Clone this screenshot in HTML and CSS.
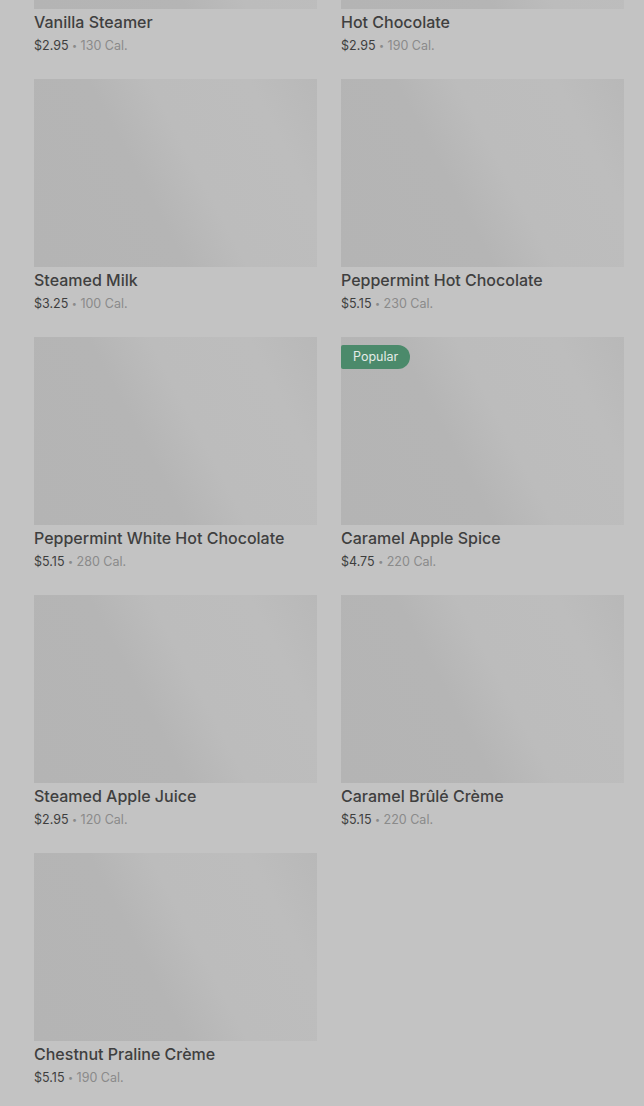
FILE: index.html
```html
<!DOCTYPE html>
<html lang="en-US">
<head>
	<meta charset="utf-8">
	<title>Menu - Hot Drinks</title>
	<link rel="stylesheet" href="styles.css">
</head>
<body>
<div class="menu">
	<!-- product grid, page is scrolled so first row is cut off -->
	<div class="grid">
		<div class="item">
			<div class="thumb"></div>
			<div class="name">Vanilla Steamer</div>
			<div class="meta"><span class="price">$2.95</span> <span class="dot">&bull;</span> 130 Cal.</div>
		</div>
		<div class="item">
			<div class="thumb"></div>
			<div class="name">Hot Chocolate</div>
			<div class="meta"><span class="price">$2.95</span> <span class="dot">&bull;</span> 190 Cal.</div>
		</div>
		<div class="item">
			<div class="thumb"></div>
			<div class="name">Steamed Milk</div>
			<div class="meta"><span class="price">$3.25</span> <span class="dot">&bull;</span> 100 Cal.</div>
		</div>
		<div class="item">
			<div class="thumb"></div>
			<div class="name">Peppermint Hot Chocolate</div>
			<div class="meta"><span class="price">$5.15</span> <span class="dot">&bull;</span> 230 Cal.</div>
		</div>
		<div class="item">
			<div class="thumb"></div>
			<div class="name">Peppermint White Hot Chocolate</div>
			<div class="meta"><span class="price">$5.15</span> <span class="dot">&bull;</span> 280 Cal.</div>
		</div>
		<div class="item">
			<div class="thumb"><span class="badge">Popular</span></div>
			<div class="name">Caramel Apple Spice</div>
			<div class="meta"><span class="price">$4.75</span> <span class="dot">&bull;</span> 220 Cal.</div>
		</div>
		<div class="item">
			<div class="thumb"></div>
			<div class="name">Steamed Apple Juice</div>
			<div class="meta"><span class="price">$2.95</span> <span class="dot">&bull;</span> 120 Cal.</div>
		</div>
		<div class="item">
			<div class="thumb"></div>
			<div class="name">Caramel Brûlé Crème</div>
			<div class="meta"><span class="price">$5.15</span> <span class="dot">&bull;</span> 220 Cal.</div>
		</div>
		<div class="item">
			<div class="thumb"></div>
			<div class="name">Chestnut Praline Crème</div>
			<div class="meta"><span class="price">$5.15</span> <span class="dot">&bull;</span> 190 Cal.</div>
		</div>
	</div>
</div>
</body>
</html>
```

FILE: styles.css
```css
html {
	background: #c3c3c3;
}
body {
	margin: 0;
	height: 1106px;
	overflow: hidden;
	font-family: Inter, "Noto Sans", sans-serif;
	color: #3b3b3b;
}
.menu {
	margin-top: -179px;
	padding: 0 20px 0 34px;
}
.grid {
	display: grid;
	grid-template-columns: 283px 283px;
	column-gap: 24px;
}
.item {
	margin-bottom: 22px;
}
.thumb {
	position: relative;
	height: 188px;
	background: linear-gradient(62deg, #b4b4b4 0%, #b5b5b5 40%, #bcbcbc 56%, #bdbdbd 82%, #b8b8b8 100%);
}
.badge {
	position: absolute;
	top: 8px;
	left: 0;
	height: 24px;
	line-height: 24px;
	padding: 0 12px;
	background: #4b8a6b;
	color: #e4ece8;
	font-size: 12.5px;
	border-radius: 2px 12px 12px 2px;
}
.name {
	margin-top: 1px;
	font-size: 16px;
	font-weight: 500;
	line-height: 24px;
	color: #3f3f3f;
}
.meta {
	padding-top: 1px;
	font-size: 12.5px;
	line-height: 22px;
	color: #8a8a8a;
}
.price {
	color: #3e3e3e;
}
.dot {
	font-size: 9px;
	vertical-align: 1px;
}
```
